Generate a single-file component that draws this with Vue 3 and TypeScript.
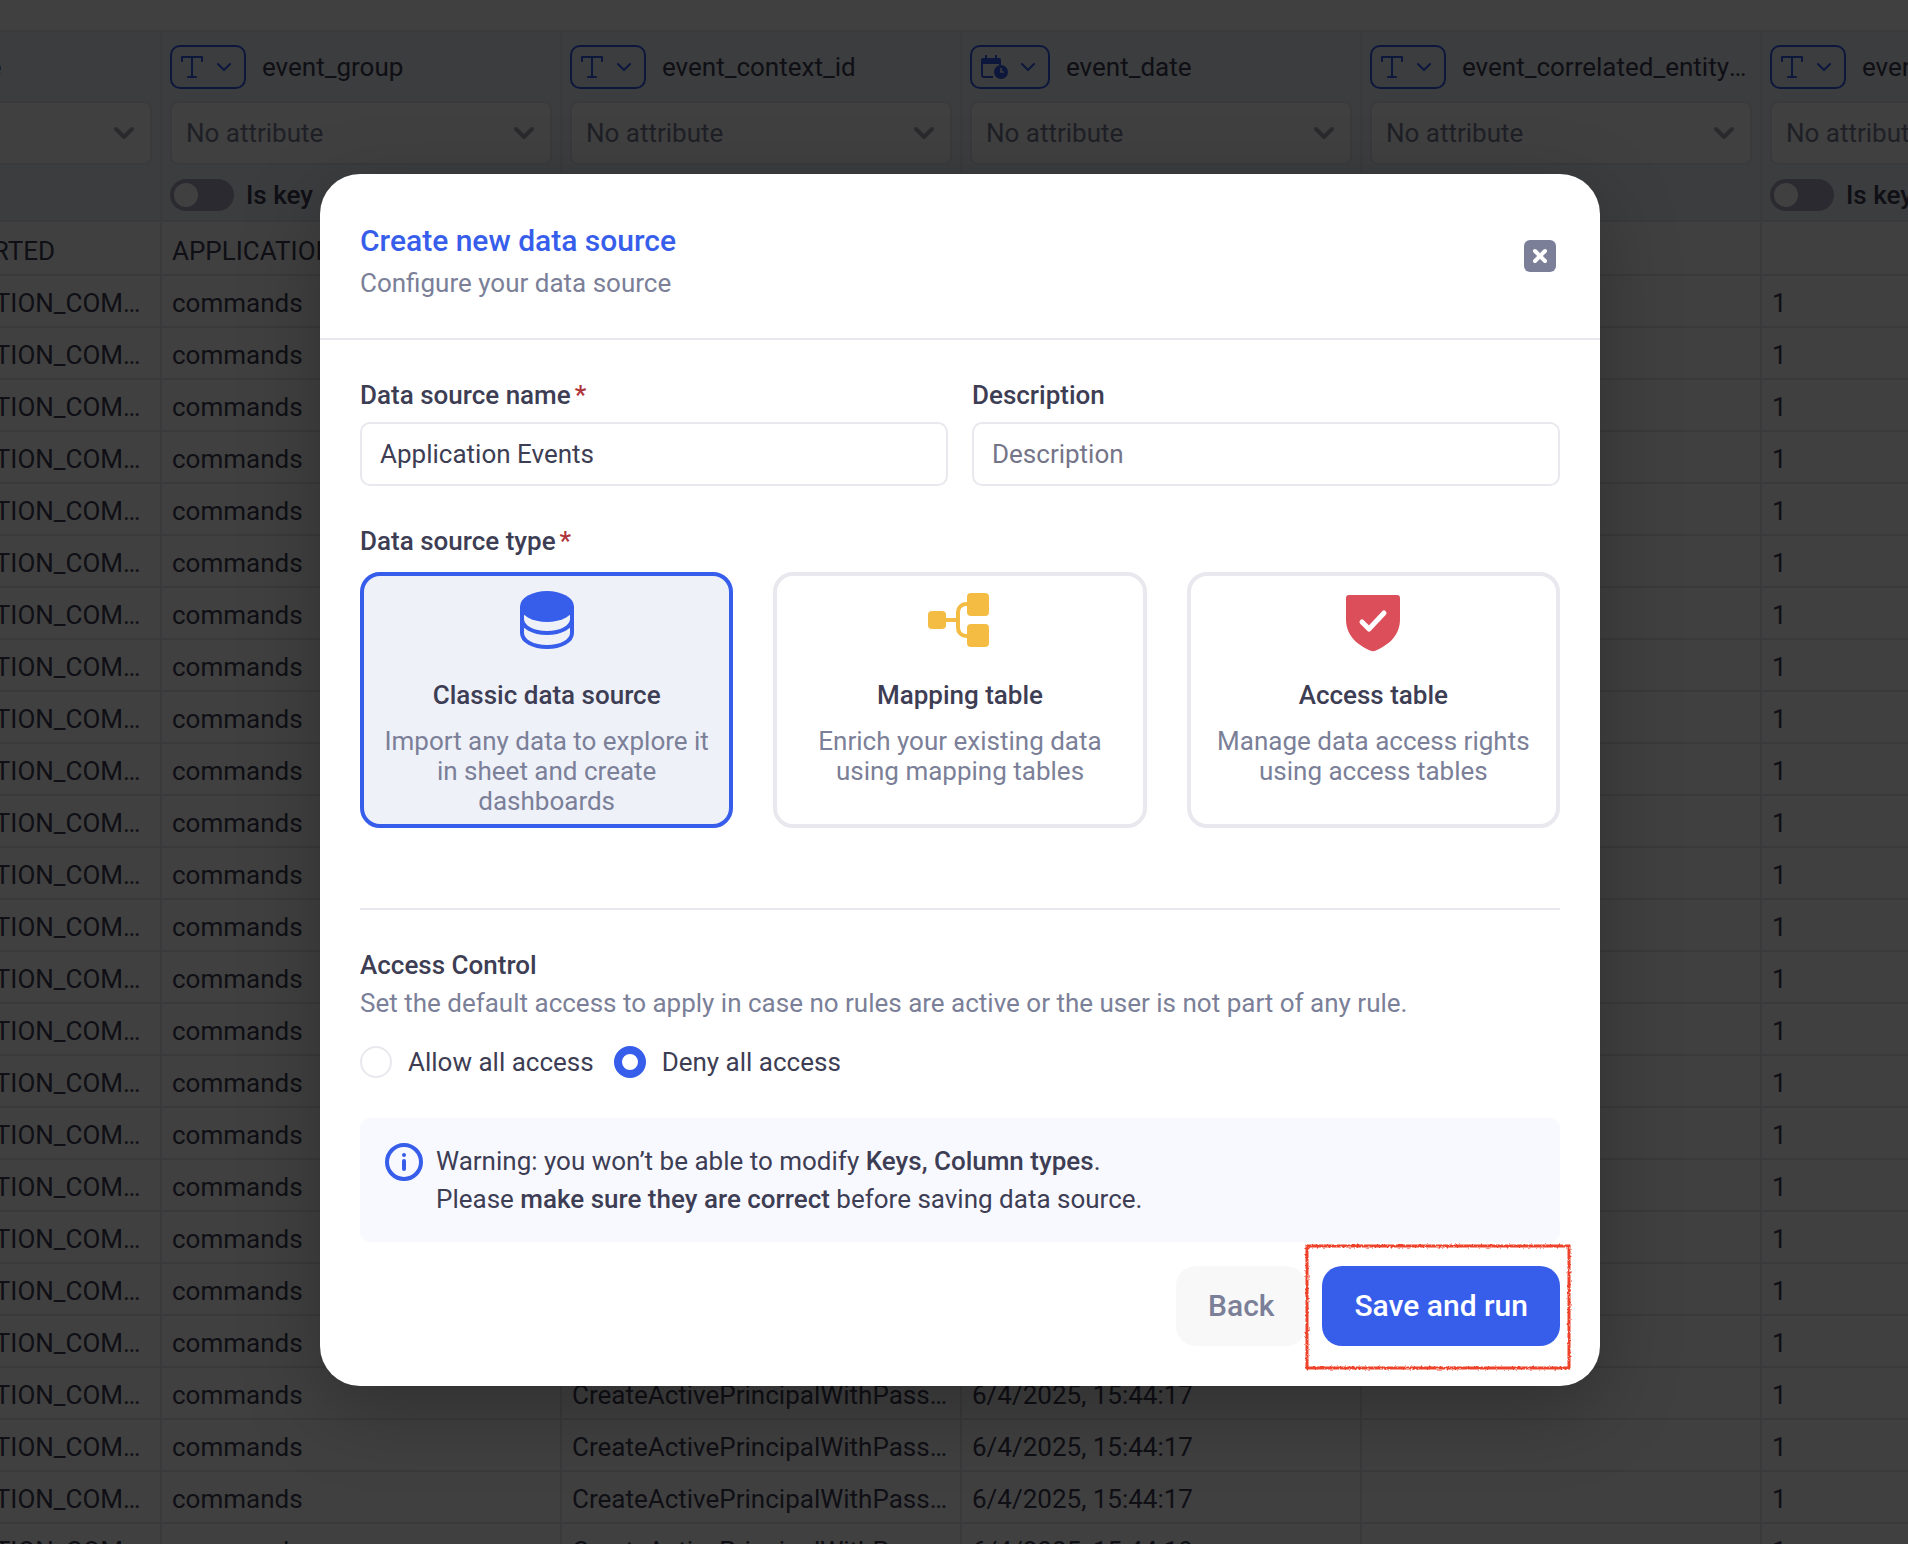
<script setup lang="ts">
import { ref } from 'vue'

type ColumnType = 'text' | 'date'

interface Column {
  id: string
  type: ColumnType
}

interface SourceType {
  id: string
  title: string
  text: string
}

const columns: Column[] = [
  { id: 'event_name', type: 'text' },
  { id: 'event_group', type: 'text' },
  { id: 'event_context_id', type: 'text' },
  { id: 'event_date', type: 'date' },
  { id: 'event_correlated_entity_id', type: 'text' },
  { id: 'event_version', type: 'text' },
]

const rows: string[][] = Array.from({ length: 26 }, (_, i) => [
  i === 0 ? 'APPLICATION_STARTED' : 'MANAGE_APPLICATION_COMMAND',
  i === 0 ? 'APPLICATION' : 'commands',
  i === 0 ? '' : 'CreateActivePrincipalWithPassword',
  i === 25 ? '6/4/2025, 15:44:18' : '6/4/2025, 15:44:17',
  '',
  i === 0 ? '' : '1',
])

const sourceTypes: SourceType[] = [
  {
    id: 'classic',
    title: 'Classic data source',
    text: 'Import any data to explore it in sheet and create dashboards',
  },
  {
    id: 'mapping',
    title: 'Mapping table',
    text: 'Enrich your existing data using mapping tables',
  },
  {
    id: 'access',
    title: 'Access table',
    text: 'Manage data access rights using access tables',
  },
]

const name = ref('Application Events')
const description = ref('')
const sourceType = ref('classic')
const access = ref('deny')
</script>

<template>
  <div class="page">
    <main class="sheet">
      <table class="grid">
        <thead>
          <tr>
            <th v-for="col in columns" :key="col.id" scope="col">
              <div class="col-head">
                <button class="chip" type="button" :aria-label="`Type of ${col.id}`">
                  <svg v-if="col.type === 'text'" width="24" height="24" viewBox="0 0 24 24" fill="none" stroke="currentColor" stroke-width="2" stroke-linecap="round" stroke-linejoin="round">
                    <path d="M2 6V2h20v4M12 2v20M8 22h8" />
                  </svg>
                  <svg v-else width="28" height="24" viewBox="0 0 28 24">
                    <path d="M2 8v12a2 2 0 0 0 2 2h9M20 6v4" fill="none" stroke="currentColor" stroke-width="2" />
                    <path d="M1 9V5a2 2 0 0 1 2-2h16a2 2 0 0 1 2 2v4z" fill="currentColor" />
                    <path d="M6 0v4M16 0v4" stroke="currentColor" stroke-width="2" />
                    <circle cx="21" cy="17" r="7" fill="currentColor" />
                    <path d="M21 13v4h3" fill="none" stroke="#eef1f8" stroke-width="1.6" />
                  </svg>
                  <svg width="14" height="10" viewBox="0 0 14 10" fill="none" stroke="currentColor" stroke-width="2" stroke-linecap="round" stroke-linejoin="round">
                    <path d="M1 2l6 6 6-6" />
                  </svg>
                </button>
                <span class="col-name">{{ col.id }}</span>
              </div>
              <div class="attribute">
                <select :aria-label="`Attribute of ${col.id}`">
                  <option>No attribute</option>
                </select>
                <svg class="caret" width="22" height="14" viewBox="0 0 22 14" fill="none" stroke="currentColor" stroke-width="4" stroke-linecap="round" stroke-linejoin="round">
                  <path d="M3 3l8 8 8-8" />
                </svg>
              </div>
              <label class="key">
                <input type="checkbox" role="switch" />
                <span>Is key</span>
              </label>
            </th>
          </tr>
        </thead>
        <tbody>
          <tr v-for="(row, r) in rows" :key="r">
            <td v-for="(cell, c) in row" :key="c">{{ cell }}</td>
          </tr>
        </tbody>
      </table>
    </main>

    <div class="overlay">
      <form class="dialog" role="dialog" aria-labelledby="dialog-title" @submit.prevent>
        <header class="dialog-head">
          <div>
            <h1 id="dialog-title">Create new data source</h1>
            <p class="muted">Configure your data source</p>
          </div>
          <button class="close" type="button" aria-label="Close">
            <svg width="32" height="32" viewBox="0 0 32 32">
              <rect width="32" height="32" rx="6" fill="#7b7f98" />
              <path d="M11 11l10 10M21 11L11 21" stroke="#fff" stroke-width="4" stroke-linecap="round" />
            </svg>
          </button>
        </header>

        <div class="dialog-body">
          <div class="fields">
            <div class="field">
              <label for="ds-name">Data source name<span class="required">*</span></label>
              <input id="ds-name" v-model="name" type="text" />
            </div>
            <div class="field">
              <label for="ds-desc">Description</label>
              <input id="ds-desc" v-model="description" type="text" placeholder="Description" />
            </div>
          </div>

          <fieldset class="types">
            <legend>Data source type<span class="required">*</span></legend>
            <div class="cards">
              <label v-for="t in sourceTypes" :key="t.id" class="card" :class="{ selected: sourceType === t.id }">
                <input v-model="sourceType" type="radio" name="source-type" :value="t.id" />
                <svg v-if="t.id === 'classic'" width="64" height="64" viewBox="0 0 64 64" fill="none" stroke="#375eeb" stroke-width="4">
                  <path d="M7 18v27c0 8 11 14 25 14s25-6 25-14V18M7 31c0 8 11 14 25 14s25-6 25-14" />
                  <ellipse cx="32" cy="18.500" rx="27" ry="15.500" fill="#375eeb" stroke="none" />
                </svg>
                <svg v-else-if="t.id === 'mapping'" width="64" height="64" viewBox="0 0 64 64">
                  <path d="M17 32h13M41 16h-3a8 8 0 0 0-8 8v16a8 8 0 0 0 8 8h3" fill="none" stroke="#f4bc42" stroke-width="4" />
                  <rect x="0" y="23" width="18" height="18" rx="4" fill="#f4bc42" />
                  <rect x="39" y="5" width="22" height="23" rx="4" fill="#f4bc42" />
                  <rect x="39" y="36" width="22" height="23" rx="4" fill="#f4bc42" />
                </svg>
                <svg v-else width="64" height="64" viewBox="0 0 64 64">
                  <path d="M5 10a3 3 0 0 1 3-3h48a3 3 0 0 1 3 3v21c0 16-10 25-24 31.500q-3 1.400-6 0C15 56 5 47 5 31z" fill="#dc4e59" />
                  <path d="M21 34l7 7 15-16" fill="none" stroke="#fff" stroke-width="5" stroke-linecap="round" stroke-linejoin="round" />
                </svg>
                <strong>{{ t.title }}</strong>
                <span class="card-text">{{ t.text }}</span>
              </label>
            </div>
          </fieldset>

          <section class="access">
            <h2>Access Control</h2>
            <p class="muted">
              Set the default access to apply in case no rules are active or the user is not part of any rule.
            </p>
            <div class="choices">
              <label><input v-model="access" type="radio" name="access" value="allow" />Allow all access</label>
              <label><input v-model="access" type="radio" name="access" value="deny" />Deny all access</label>
            </div>
          </section>

          <div class="notice">
            <svg width="40" height="40" viewBox="0 0 40 40" fill="none" stroke="#375eeb" stroke-width="4" stroke-linecap="round">
              <circle cx="20" cy="20" r="17" />
              <path d="M20 19v8" />
              <circle cx="20" cy="13" r="2" fill="#375eeb" stroke="none" />
            </svg>
            <p>
              Warning: you won’t be able to modify <b>Keys, Column types</b>.<br />
              Please <b>make sure they are correct</b> before saving data source.
            </p>
          </div>

          <footer class="actions">
            <button class="btn back" type="button">Back</button>
            <div class="marked">
              <button class="btn save" type="submit">Save and run</button>
              <svg class="marker" width="274" height="134" viewBox="0 0 274 134" aria-hidden="true">
                <filter id="rough" x="-5%" y="-5%" width="110%" height="110%">
                  <feTurbulence type="fractalNoise" baseFrequency="0.5" numOctaves="2" seed="4" />
                  <feDisplacementMap in="SourceGraphic" scale="3" xChannelSelector="R" yChannelSelector="G" />
                </filter>
                <rect x="6" y="6" width="262" height="122" fill="none" stroke="#ee432a" stroke-width="3" filter="url(#rough)" />
              </svg>
            </div>
          </footer>
        </div>
      </form>
    </div>
  </div>
</template>

<style>
body {
  margin: 0;
}
</style>

<style scoped>
.page {
  --ink: #3d3d54;
  --muted: #7b7f98;
  --blue: #375eeb;
  --line: #e8e8ee;
  height: 100vh;
  position: relative;
  overflow: hidden;
  background: #fff;
  color: var(--ink);
  font-family: Roboto, 'Liberation Sans', sans-serif;
  font-size: 26px;
  line-height: 38px;
}

*,
*::before {
  box-sizing: border-box;
}

h1,
h2,
p {
  margin: 0;
}

button,
input,
select {
  font: inherit;
  color: inherit;
}

.muted {
  color: var(--muted);
}

/* Sheet, scrolled to the right behind the dialog */
.sheet {
  padding-top: 30px;
  margin-left: -238px;
}

.grid {
  width: 2400px;
  table-layout: fixed;
  border-spacing: 0;
  border-top: 2px solid var(--line);
}

.grid th {
  height: 190px;
  padding: 13px 8px 9px;
  background: #eef1f8;
  border-right: 2px solid var(--line);
  border-bottom: 2px solid var(--line);
  font-weight: 400;
  text-align: left;
  vertical-align: top;
}

.grid td {
  height: 52px;
  padding: 4px 10px 0;
  border-right: 2px solid var(--line);
  border-bottom: 2px solid var(--line);
  overflow: hidden;
  white-space: nowrap;
  text-overflow: ellipsis;
}

.grid tbody tr:first-child td {
  height: 54px;
  padding-top: 6px;
}

.col-head {
  display: flex;
  align-items: center;
  gap: 16px;
  margin-bottom: 12px;
}

.chip {
  flex: none;
  display: flex;
  align-items: center;
  gap: 13px;
  height: 44px;
  padding: 0 13px 0 8px;
  border: 2px solid var(--blue);
  border-radius: 10px;
  background: none;
  color: var(--blue);
}

.col-name {
  overflow: hidden;
  white-space: nowrap;
  text-overflow: ellipsis;
}

.attribute {
  position: relative;
  margin-bottom: 14px;
}

.attribute select {
  display: block;
  appearance: none;
  width: 100%;
  height: 64px;
  padding: 0 14px;
  border: 2px solid var(--line);
  border-radius: 8px;
  background: #fff;
  color: var(--muted);
}

.caret {
  position: absolute;
  right: 17px;
  top: 25px;
  color: #a8a8b4;
  pointer-events: none;
}

.key {
  display: flex;
  align-items: center;
  gap: 12px;
  height: 32px;
  font-weight: 500;
}

.key input {
  appearance: none;
  display: flex;
  width: 64px;
  height: 32px;
  margin: 0;
  padding: 4px;
  border-radius: 16px;
  background: #a9a9c0;
}

.key input::before {
  content: '';
  width: 24px;
  height: 24px;
  border-radius: 50%;
  background: #fff;
}

/* Dialog */
.overlay {
  position: absolute;
  inset: 0;
  display: flex;
  justify-content: center;
  align-items: flex-start;
  padding: 174px 0 0 12px;
  background: rgba(0, 0, 0, 0.75);
}

.dialog {
  width: 100%;
  max-width: 1280px;
  border-radius: 40px;
  background: #fff;
  box-shadow: 0 24px 80px rgba(0, 0, 0, 0.25);
}

.dialog-head {
  display: flex;
  align-items: flex-start;
  justify-content: space-between;
  padding: 44px 40px 36px;
  border-bottom: 2px solid var(--line);
}

h1 {
  color: var(--blue);
  font-size: 30px;
  font-weight: 500;
  line-height: 46px;
}

.close {
  display: grid;
  place-items: center;
  width: 40px;
  height: 40px;
  margin-top: 18px;
  padding: 0;
  border: 0;
  background: none;
}

.dialog-body {
  padding: 36px 40px 40px;
}

.fields {
  display: grid;
  grid-template-columns: 1fr 1fr;
  gap: 24px;
}

.field {
  display: flex;
  flex-direction: column;
  gap: 8px;
}

.field label,
legend,
h2 {
  padding: 0;
  font-size: 26px;
  font-weight: 500;
  line-height: 38px;
}

.required {
  margin-left: 4px;
  color: #b0323a;
}

.field input {
  width: 100%;
  height: 64px;
  padding: 0 18px;
  border: 2px solid var(--line);
  border-radius: 10px;
  background: #fff;
  outline: 0;
}

.field input::placeholder {
  color: #757589;
  opacity: 1;
}

.types {
  min-width: 0;
  margin: 36px 0 0;
  padding: 0;
  border: 0;
}

.cards {
  display: grid;
  grid-template-columns: repeat(3, 1fr);
  gap: 40px;
  padding-top: 12px;
}

.card {
  position: relative;
  display: flex;
  flex-direction: column;
  align-items: center;
  padding: 12px 16px 8px;
  border: 4px solid var(--line);
  border-radius: 20px;
  line-height: 30px;
  text-align: center;
}

.card.selected {
  border-color: var(--blue);
  background: #eef1f8;
}

.card input {
  position: absolute;
  opacity: 0;
}

.card strong {
  margin: 28px 0 16px;
  font-weight: 500;
}

.card-text {
  color: var(--muted);
}

.access {
  margin-top: 80px;
  padding-top: 36px;
  border-top: 2px solid var(--line);
}

.choices {
  display: flex;
  gap: 20px;
  margin: 24px 0 40px;
}

.choices label {
  display: flex;
  align-items: center;
  gap: 16px;
  height: 32px;
}

.choices input {
  appearance: none;
  width: 32px;
  height: 32px;
  margin: 0;
  border: 2px solid var(--line);
  border-radius: 50%;
}

.choices input:checked {
  border: 8px solid var(--blue);
}

.notice {
  display: flex;
  gap: 12px;
  padding: 24px;
  border-radius: 10px;
  background: #f8f9ff;
}

.notice b {
  font-weight: 500;
}

.actions {
  display: flex;
  justify-content: flex-end;
  gap: 16px;
  margin-top: 24px;
}

.btn {
  height: 80px;
  padding: 0 32px;
  border: 0;
  border-radius: 20px;
  font-size: 30px;
  font-weight: 500;
}

.back {
  background: #f8f8f8;
  color: var(--muted);
}

.save {
  background: var(--blue);
  color: #fff;
}

.marked {
  position: relative;
}

.marker {
  position: absolute;
  top: -26px;
  left: -21px;
  pointer-events: none;
}
</style>
